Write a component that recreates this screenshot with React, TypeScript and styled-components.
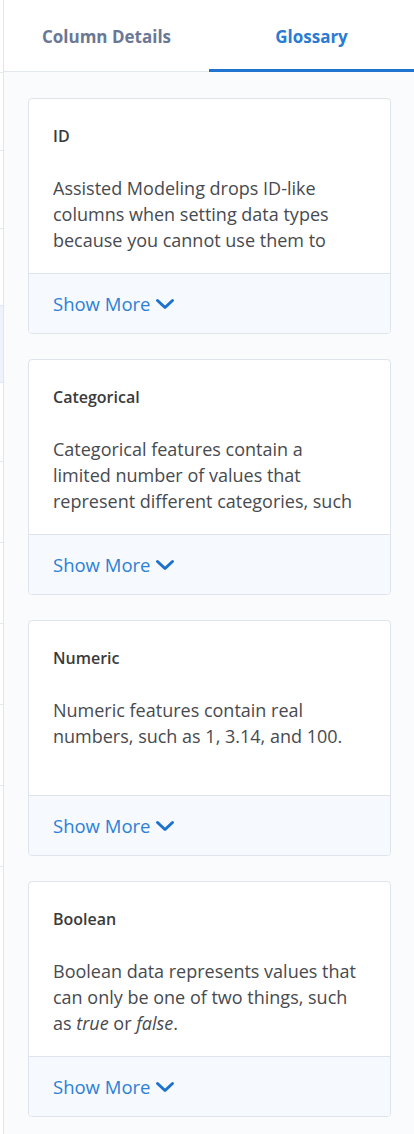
import React from "react";
import styled, { createGlobalStyle } from "styled-components";

const GlobalStyle = createGlobalStyle`
  html, body {
    margin: 0;
    padding: 0;
    background: #ffffff;
  }
  body {
    font-family: "Open Sans", "Noto Sans", sans-serif;
    -webkit-font-smoothing: antialiased;
  }
`;

const Page = styled.div`
  display: flex;
  width: 414px;
  height: 1134px;
  overflow: hidden;
`;

// the table behind the drawer peeks out at the left edge
const Backdrop = styled.div`
  width: 3px;
  flex: none;
  display: flex;
  flex-direction: column;
  background: #ffffff;
`;

const BackdropRow = styled.div<{ $h: number; $tint?: boolean }>`
  height: ${({ $h }) => $h}px;
  flex: none;
  border-bottom: 1px solid #e3e7ef;
  background: ${({ $tint }) => ($tint ? "#eef3fb" : "#ffffff")};
`;

const Drawer = styled.aside`
  flex: 1;
  display: flex;
  flex-direction: column;
  border-left: 1px solid #dfe4ee;
  background: #fafbfc;
`;

const Tabs = styled.nav`
  display: flex;
  height: 72px;
  background: #ffffff;
  border-bottom: 1px solid #e3e7ef;
  box-sizing: border-box;
`;

const Tab = styled.button<{ $active?: boolean }>`
  flex: 1;
  border: 0;
  background: transparent;
  padding: 3px 0 0;
  font-family: inherit;
  font-size: 17px;
  font-weight: 700;
  color: ${({ $active }) => ($active ? "#2a7bd3" : "#6b7895")};
  border-bottom: 3px solid ${({ $active }) => ($active ? "#1f74cf" : "transparent")};
  margin-bottom: -1px;
  cursor: pointer;
`;

const List = styled.div`
  display: flex;
  flex-direction: column;
  gap: 25px;
  padding: 26px 23px 0 24px;
`;

const Card = styled.section`
  display: flex;
  flex-direction: column;
  background: #ffffff;
  border: 1px solid #dfe3ec;
  border-radius: 4px;
  overflow: hidden;
`;

const CardBody = styled.div`
  height: 174px;
  padding: 27px 29px 0 24px;
  box-sizing: border-box;
  overflow: hidden;
`;

const Term = styled.h3`
  margin: 0;
  font-size: 16px;
  line-height: 20px;
  font-weight: 600;
  color: #3a3a3a;
`;

const Definition = styled.p`
  margin: 29px 0 0;
  font-size: 18px;
  line-height: 26px;
  color: #474a4f;
  max-height: 78px;
  overflow: hidden;

  em {
    font-style: italic;
  }
`;

const CardFooter = styled.div`
  height: 60px;
  box-sizing: border-box;
  display: flex;
  align-items: center;
  padding: 0 24px;
  background: #f6f9fe;
  border-top: 1px solid #dfe3ec;
`;

const ShowMore = styled.button`
  display: flex;
  align-items: center;
  gap: 5px;
  border: 0;
  padding: 0;
  background: transparent;
  font-family: inherit;
  font-size: 18.5px;
  color: #2c80d6;
  cursor: pointer;
`;

const Chevron = () => (
  <svg width="20" height="14" viewBox="0 0 20 14" fill="none">
    <path
      d="M2.5 3.5L10 10.5L17.5 3.5"
      stroke="#1c72cc"
      strokeWidth="3"
      strokeLinecap="round"
      strokeLinejoin="round"
    />
  </svg>
);

const backdropRows = [
  { h: 72 },
  { h: 77 },
  { h: 77 },
  { h: 76 },
  { h: 76, tint: true },
  { h: 78 },
  { h: 80 },
  { h: 80 },
  { h: 80 },
  { h: 80 },
  { h: 80 },
];

const terms: { name: string; text: React.ReactNode }[] = [
  {
    name: "ID",
    text: "Assisted Modeling drops ID-like columns when setting data types because you cannot use them to train a model.",
  },
  {
    name: "Categorical",
    text: "Categorical features contain a limited number of values that represent different categories, such as colors or product types.",
  },
  {
    name: "Numeric",
    text: "Numeric features contain real numbers, such as 1, 3.14, and 100.",
  },
  {
    name: "Boolean",
    text: (
      <>
        Boolean data represents values that can only be one of two things, such as <em>true</em> or{" "}
        <em>false</em>.
      </>
    ),
  },
];

export default function App() {
  return (
    <>
      <GlobalStyle />
      <Page>
        <Backdrop>
          {backdropRows.map((r, i) => (
            <BackdropRow key={i} $h={r.h} $tint={r.tint} />
          ))}
        </Backdrop>
        <Drawer>
          <Tabs>
            <Tab>Column Details</Tab>
            <Tab $active>Glossary</Tab>
          </Tabs>
          <List>
            {terms.map((t) => (
              <Card key={t.name}>
                <CardBody>
                  <Term>{t.name}</Term>
                  <Definition>{t.text}</Definition>
                </CardBody>
                <CardFooter>
                  <ShowMore>
                    Show More <Chevron />
                  </ShowMore>
                </CardFooter>
              </Card>
            ))}
          </List>
        </Drawer>
      </Page>
    </>
  );
}
